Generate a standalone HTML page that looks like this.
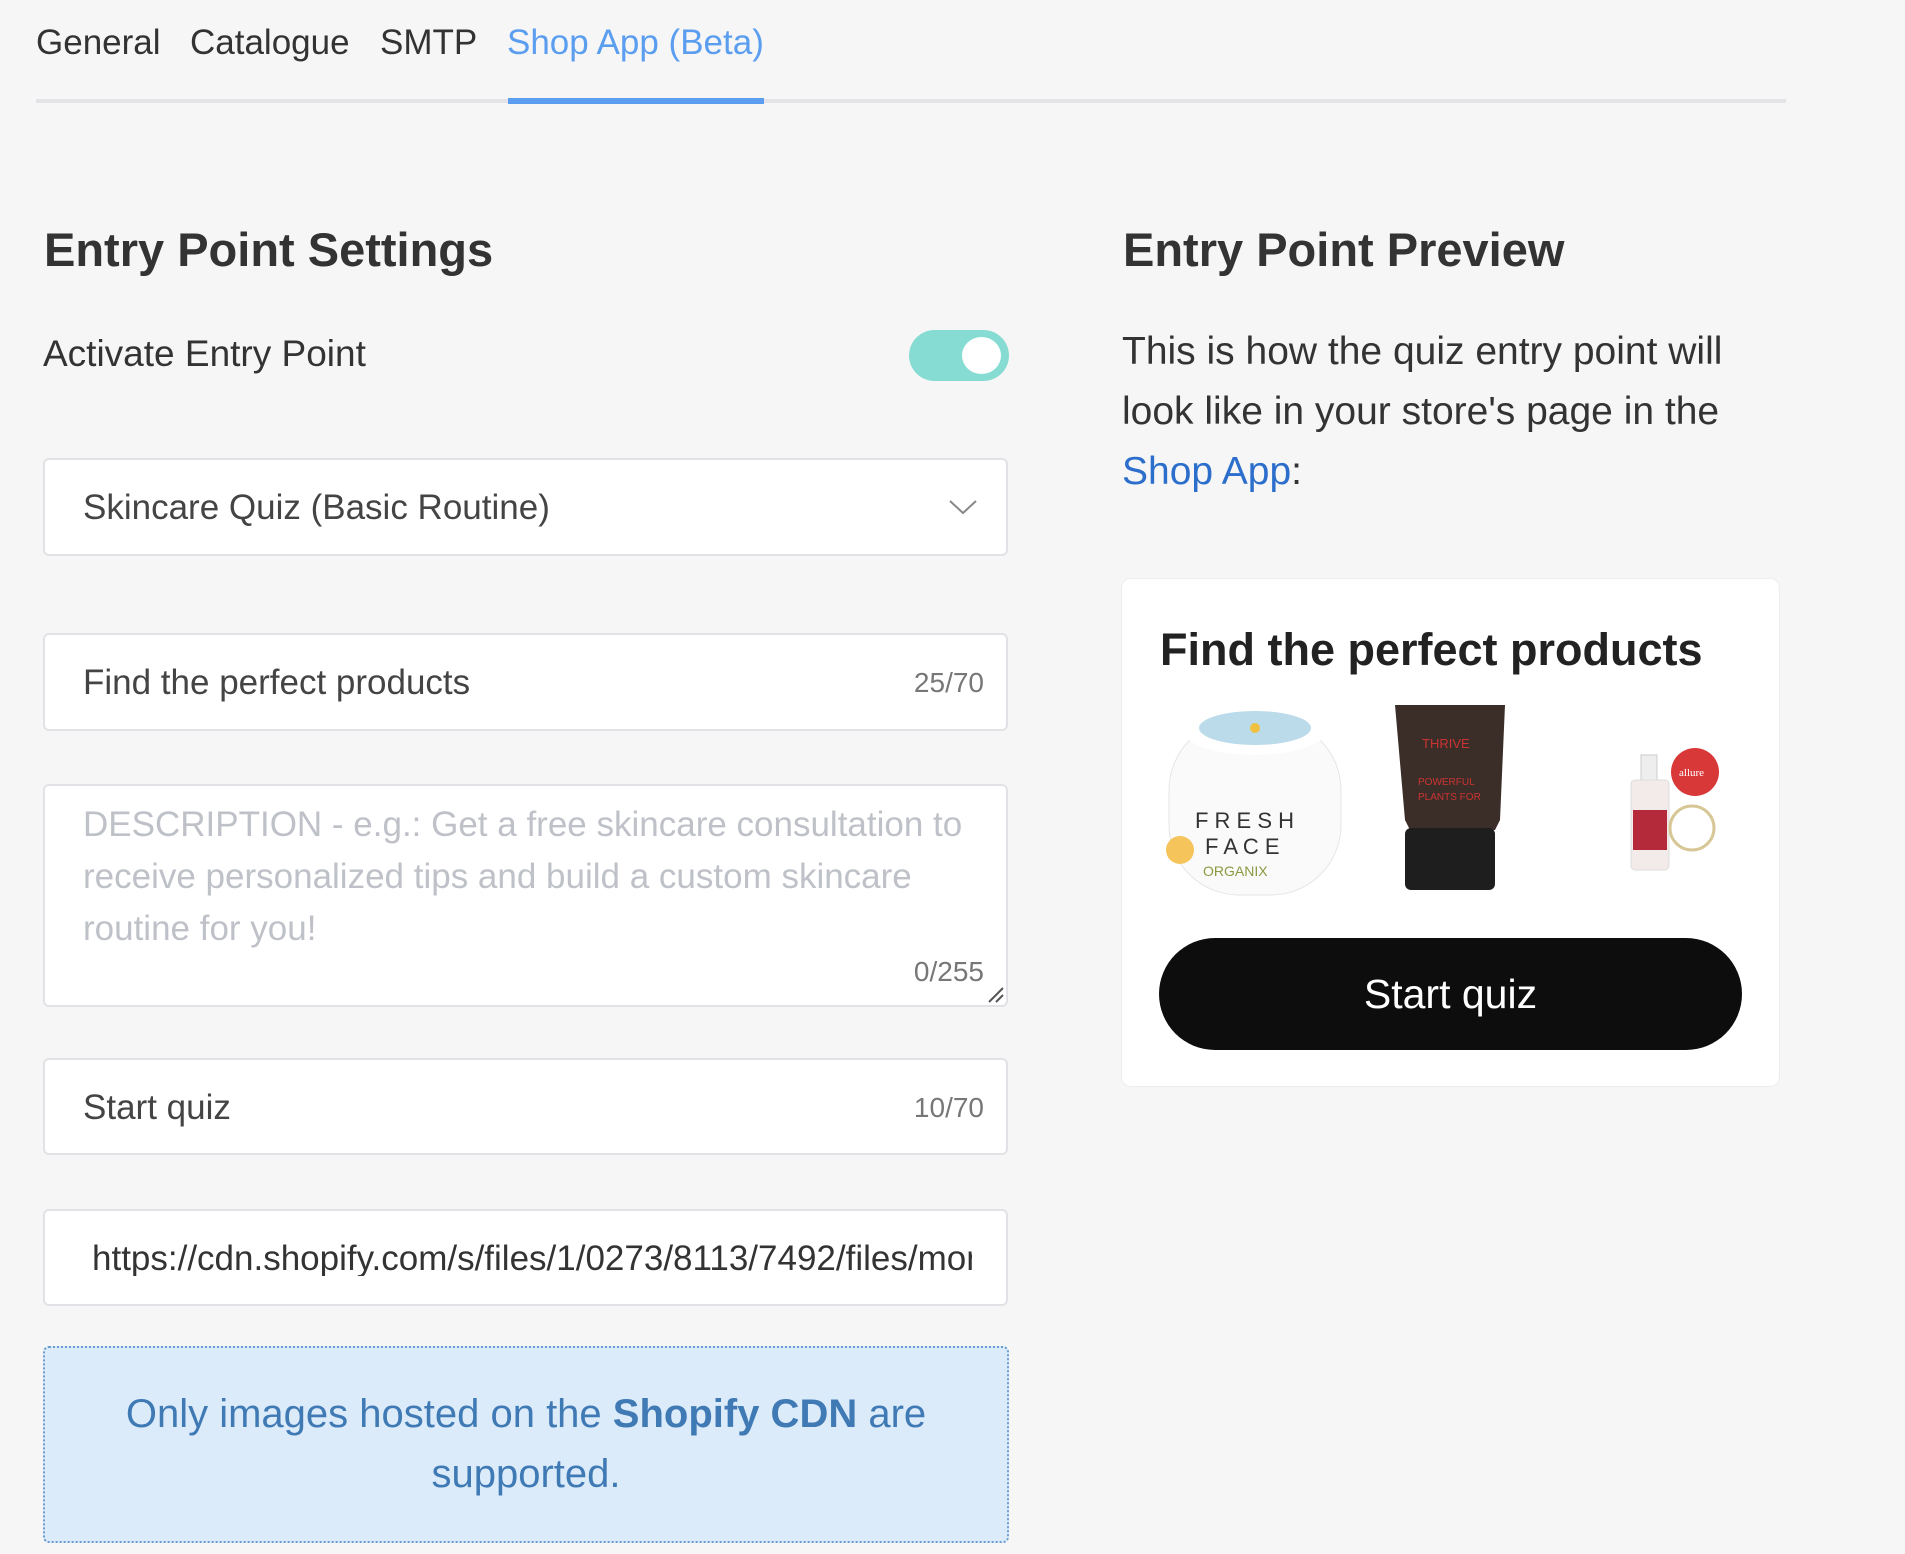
<!DOCTYPE html>
<html><head><meta charset="utf-8"><style>
*{box-sizing:border-box;margin:0;padding:0}
body{width:1905px;height:1554px;background:#f6f6f6;font-family:"Liberation Sans",Arial,sans-serif;color:#333;position:relative;overflow:hidden}
.a{position:absolute;white-space:nowrap}
.tab{font-size:35px;top:23px;color:#333}
.box{position:absolute;left:43px;width:965px;background:#fff;border:2px solid #e2e2e6;border-radius:6px}
.txt{position:absolute;left:38px;font-size:35px;color:#444;line-height:1}
.cnt{position:absolute;right:22px;font-size:28px;color:#777;line-height:1}
</style></head><body>
<div class="a tab" style="left:36px">General</div>
<div class="a tab" style="left:190px">Catalogue</div>
<div class="a tab" style="left:380px">SMTP</div>
<div class="a tab" style="left:507px;color:#5b9ef0">Shop App (Beta)</div>
<div class="a" style="left:36px;top:99px;width:1750px;height:4px;background:#e3e3e8"></div>
<div class="a" style="left:508px;top:98px;width:256px;height:6px;background:#5b9ef0"></div>

<div class="a" style="left:44px;top:222px;font-size:47px;font-weight:bold">Entry Point Settings</div>
<div class="a" style="left:43px;top:333px;font-size:37px">Activate Entry Point</div>
<div class="a" style="left:909px;top:330px;width:100px;height:51px;border-radius:26px;background:#86dcd3"></div>
<div class="a" style="left:962px;top:337px;width:39px;height:37px;border-radius:50%;background:#fff"></div>

<div class="box" style="top:458px;height:98px"><div class="txt" style="top:30px">Skincare Quiz (Basic Routine)</div>
<svg class="a" style="right:28px;top:38px" width="30" height="18" viewBox="0 0 30 18"><path d="M2 3 L15 15 L28 3" fill="none" stroke="#888" stroke-width="2"/></svg></div>

<div class="box" style="top:633px;height:98px"><div class="txt" style="top:30px">Find the perfect products</div><div class="cnt" style="top:34px">25/70</div></div>

<div class="box" style="top:784px;height:223px"><div class="txt" style="top:13px;color:#bfc1c8;line-height:52px;white-space:normal;width:900px">DESCRIPTION - e.g.: Get a free skincare consultation to receive personalized tips and build a custom skincare routine for you!</div><div class="cnt" style="top:172px">0/255</div>
<svg class="a" style="right:2px;bottom:2px" width="18" height="18" viewBox="0 0 18 18"><path d="M3 17 L17 3 M10 17 L17 10" stroke="#555" stroke-width="2"/></svg></div>

<div class="box" style="top:1058px;height:97px"><div class="txt" style="top:30px">Start quiz</div><div class="cnt" style="top:34px">10/70</div></div>

<div class="box" style="top:1209px;height:97px;overflow:hidden"><div class="txt" style="left:47px;top:30px;width:880px;overflow:hidden;color:#333">https://cdn.shopify.com/s/files/1/0273/8113/7492/files/mon</div></div>

<div class="a" style="left:43px;top:1346px;width:966px;height:197px;background:#dcebfa;border:2px dotted #6a9cd0;border-radius:6px;white-space:normal;text-align:center;color:#3f7ab5;font-size:40px;line-height:60px;padding:36px 60px 0">Only images hosted on the <b>Shopify CDN</b> are supported.</div>

<div class="a" style="left:1123px;top:222px;font-size:47px;font-weight:bold">Entry Point Preview</div>
<div class="a" style="left:1122px;top:322px;font-size:39px;line-height:60px;white-space:normal;width:650px">This is how the quiz entry point will look like in your store's page in the <span style="color:#2c6ecb">Shop App</span>:</div>

<div class="a" style="left:1121px;top:578px;width:659px;height:509px;background:#fff;border-radius:10px;border:1px solid #eee"></div>
<div class="a" style="left:1160px;top:624px;font-size:45px;font-weight:bold;color:#222">Find the perfect products</div>
<svg class="a" style="left:1165px;top:700px" width="560" height="200" viewBox="0 0 560 200">
<rect x="4" y="20" width="172" height="175" rx="70" fill="#fafafa" stroke="#e6e6e6"/>
<ellipse cx="90" cy="30" rx="72" ry="25" fill="#fff"/>
<g fill="#bcdbea"><ellipse cx="90" cy="28" rx="56" ry="17"/></g>
<circle cx="90" cy="28" r="5" fill="#f0c040"/>
<text x="30" y="128" font-size="22" fill="#333" font-family="Liberation Sans">F R E S H</text>
<text x="40" y="154" font-size="22" fill="#333" font-family="Liberation Sans">F A C E</text>
<text x="38" y="176" font-size="14" fill="#8a9a40" font-family="Liberation Sans">ORGANIX</text>
<circle cx="15" cy="150" r="14" fill="#f5c45a"/>
<path d="M230 5 L340 5 L335 120 L330 130 L245 130 L240 120 Z" fill="#3b2e28"/>
<rect x="240" y="128" width="90" height="62" rx="6" fill="#1e1e1e"/>
<text x="257" y="48" font-size="13" fill="#c33" font-family="Liberation Sans">THRIVE</text>
<text x="253" y="85" font-size="10" fill="#c33" font-family="Liberation Sans">POWERFUL</text>
<text x="253" y="100" font-size="10" fill="#c33" font-family="Liberation Sans">PLANTS FOR</text>
<rect x="476" y="55" width="16" height="25" fill="#eee" stroke="#ccc"/>
<rect x="466" y="80" width="38" height="90" rx="4" fill="#f3eaea" stroke="#ddd"/>
<rect x="468" y="110" width="34" height="40" fill="#b52a3a"/>
<circle cx="530" cy="72" r="24" fill="#d93838"/>
<text x="514" y="76" font-size="11" fill="#fff" font-family="Liberation Serif">allure</text>
<circle cx="527" cy="128" r="22" fill="#fff" stroke="#d8c796" stroke-width="3"/>
</svg>
<div class="a" style="left:1159px;top:938px;width:583px;height:112px;border-radius:56px;background:#0d0d0d;color:#fff;font-size:41px;text-align:center;line-height:112px">Start quiz</div>
</body></html>
